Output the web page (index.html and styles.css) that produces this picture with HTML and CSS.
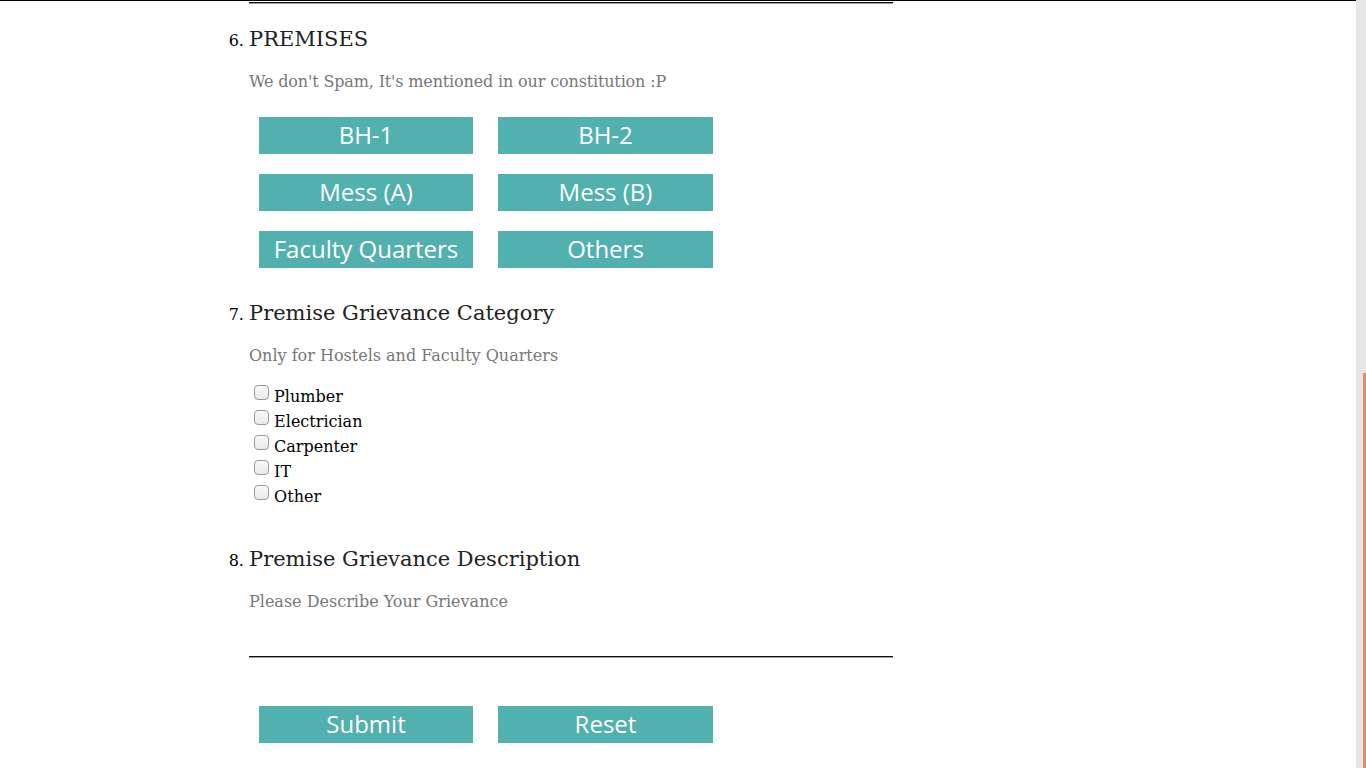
FILE: index.html
```html
<!DOCTYPE html>
<html lang="en">
<head>
<meta charset="utf-8">
<title>Grievance Form</title>
<link rel="stylesheet" href="styles.css">
</head>
<body>
<div class="page">
  <main class="main">
    <form class="form">
      <div class="answer-line first-line"></div>
      <ol class="questions" start="6">
        <li class="q q-premises">
          <h3 class="q-title">PREMISES</h3>
          <p class="q-help">We don't Spam, It's mentioned in our constitution :P</p>
          <div class="btn-grid">
            <button type="button" class="btn">BH-1</button>
            <button type="button" class="btn">BH-2</button>
            <button type="button" class="btn">Mess (A)</button>
            <button type="button" class="btn">Mess (B)</button>
            <button type="button" class="btn">Faculty Quarters</button>
            <button type="button" class="btn">Others</button>
          </div>
        </li>
        <li class="q q-category">
          <h3 class="q-title">Premise Grievance Category</h3>
          <p class="q-help">Only for Hostels and Faculty Quarters</p>
          <div class="checks">
            <label class="check"><input type="checkbox"> Plumber</label>
            <label class="check"><input type="checkbox"> Electrician</label>
            <label class="check"><input type="checkbox"> Carpenter</label>
            <label class="check"><input type="checkbox"> IT</label>
            <label class="check"><input type="checkbox"> Other</label>
          </div>
        </li>
        <li class="q q-desc">
          <h3 class="q-title">Premise Grievance Description</h3>
          <p class="q-help">Please Describe Your Grievance</p>
          <div class="answer-line desc-line"></div>
        </li>
      </ol>
      <div class="btn-grid actions">
        <button type="submit" class="btn">Submit</button>
        <button type="reset" class="btn">Reset</button>
      </div>
    </form>
  </main>
  <div class="scrollbar"><div class="thumb"></div></div>
</div>
</body>
</html>
```

FILE: styles.css
```css
html, body {
  margin: 0;
  padding: 0;
  background: #fff;
}
body {
  font-family: "DejaVu Serif", serif;
  font-size: 16px;
  color: #000;
  overflow: hidden;
}
.page {
  display: flex;
  height: 768px;
}
.main {
  flex: 1;
  border-top: 1px solid #000;
}
.scrollbar {
  width: 10px;
  background: #e6e6e6;
  display: flex;
  justify-content: flex-end;
}
.thumb {
  width: 3px;
  margin-top: 373px;
  height: 395px;
  background: #e98b6b;
}
.form {
  padding-left: 249px;
  padding-top: 1px;
}
.answer-line {
  width: 644px;
  height: 0;
  border-top: 1px solid #111;
  box-shadow: 0 1px 0 #8fa3a3;
}
.questions {
  margin: 0;
  padding: 0;
  list-style: decimal outside;
}
.q {
  font-size: 16px;
  color: #000;
}
.q-title {
  margin: 0;
  font-size: 21px;
  font-weight: normal;
  color: #222;
}
.q-help {
  margin: 0;
  font-size: 16px;
  color: #777;
}
.q-premises .q-help { margin-top: 21px; letter-spacing: -0.15px; }
.q-premises .q-title { margin-top: 24px; }
.btn-grid {
  display: grid;
  grid-template-columns: 214px 215px;
  column-gap: 25px;
  row-gap: 20px;
  margin-left: 10px;
}
.q-premises .btn-grid { margin-top: 26px; }
.btn {
  height: 37px;
  border: 0;
  padding: 0 0 2px;
  background: #52b0ae;
  color: #fff;
  font-family: "Open Sans", sans-serif;
  font-size: 24px;
  line-height: 35px;
  cursor: pointer;
}
.q-category .q-title { margin-top: 33px; }
.q-category .q-help { margin-top: 21px; }
.checks {
  margin-top: 17px;
  display: flex;
  flex-direction: column;
}
.check {
  display: block;
  height: 25px;
  line-height: 25px;
}
.check input {
  appearance: none;
  -webkit-appearance: none;
  box-sizing: border-box;
  width: 15px;
  height: 15px;
  margin: 3px 0 2px 5px;
  border: 1px solid #9a9a9a;
  border-radius: 4px;
  background: linear-gradient(#fafafa, #e9e9e9);
  vertical-align: baseline;
}
.q-desc .q-title { margin-top: 40px; }
.q-desc .q-help { margin-top: 21px; }
.desc-line { margin-top: 45px; }
.actions { margin-top: 49px; }
```
